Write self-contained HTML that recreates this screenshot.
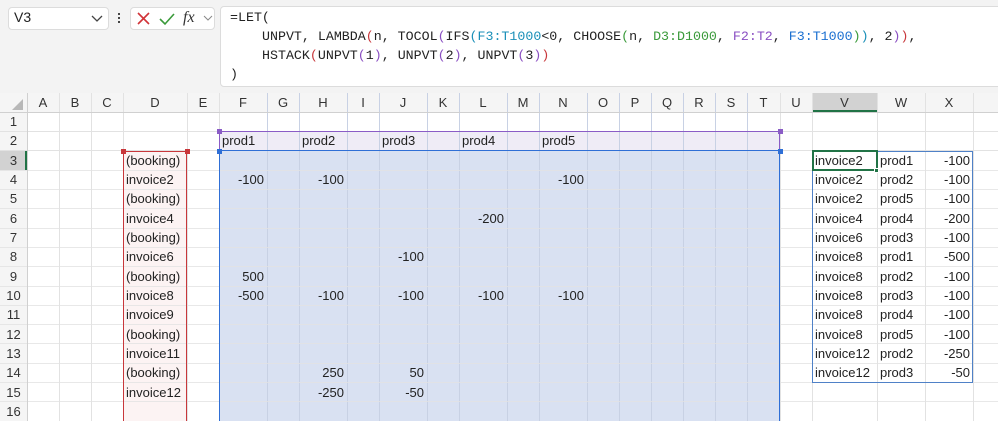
<!DOCTYPE html>
<html><head><meta charset="utf-8"><style>
*{margin:0;padding:0;box-sizing:border-box}
body{width:998px;height:421px;overflow:hidden;background:#fff;font-family:"Liberation Sans",Arial,sans-serif;position:relative;color:#222}
.a{position:absolute}
.t{position:absolute;height:19px;line-height:19px;font-size:13px;white-space:nowrap}
.h{position:absolute;height:19px;line-height:19px;font-size:13px;text-align:center;color:#333}
.vl{position:absolute;top:93px;width:1px;height:328px;background:#e2e2e2}
.hl{position:absolute;left:0;height:1px;width:998px;background:#e2e2e2}
.f{font-family:"Liberation Mono",monospace;font-size:13.3px;position:absolute;white-space:pre;color:#222}
.r{text-align:right}
</style></head><body>
<div class="a" style="left:0;top:0;width:998px;height:93px;background:#f3f3f3"></div>
<div class="a" style="left:8px;top:7px;width:101px;height:23px;background:#fff;border:1px solid #dcdcdc;border-radius:4px"></div>
<div class="t" style="left:14px;top:8px;font-size:14px">V3</div>
<svg class="a" style="left:91px;top:15px" width="12" height="8"><path d="M1 1 L6 6 L11 1" stroke="#444" fill="none" stroke-width="1.3"/></svg>
<div class="a" style="left:118px;top:13px;width:2px;height:2px;background:#444;box-shadow:0 4px #444,0 8px #444"></div>
<div class="a" style="left:130px;top:7px;width:85px;height:23px;background:#fff;border:1px solid #dcdcdc;border-radius:4px"></div>
<svg class="a" style="left:136px;top:11px" width="16" height="16"><path d="M2 2 L13 13 M13 2 L2 13" stroke="#d13438" stroke-width="1.6"/></svg>
<svg class="a" style="left:158px;top:11px" width="18" height="16"><path d="M2 8 L7 13 L16 3" stroke="#3a9a3a" fill="none" stroke-width="1.6"/></svg>
<div class="t" style="left:183px;top:8px;font-family:'Liberation Serif',serif;font-style:italic;font-size:16px;color:#333">fx</div>
<svg class="a" style="left:203px;top:15px" width="10" height="7"><path d="M1 1 L5 5 L9 1" stroke="#888" fill="none" stroke-width="1"/></svg>
<div class="a" style="left:220px;top:6px;width:790px;height:81px;background:#fff;border:1px solid #dcdcdc;border-radius:4px"></div>
<div class="f" style="left:230px;top:10px">=LET(</div>
<div class="f" style="left:262px;top:29px">UNPVT, LAMBDA<span style="color:#c8373b">(</span>n, TOCOL<span style="color:#8a4fc2">(</span>IFS<span style="color:#1a8fb8">(</span><span style="color:#1a8fb8">F3:T1000</span>&lt;0, CHOOSE<span style="color:#3a9a3a">(</span>n, <span style="color:#3a9a3a">D3:D1000</span>, <span style="color:#8a4fc2">F2:T2</span>, <span style="color:#1a6fd0">F3:T1000</span><span style="color:#3a9a3a">)</span><span style="color:#1a8fb8">)</span>, 2<span style="color:#8a4fc2">)</span><span style="color:#c8373b">)</span>,</div>
<div class="f" style="left:262px;top:48px">HSTACK<span style="color:#c8373b">(</span>UNPVT<span style="color:#8a4fc2">(</span>1<span style="color:#8a4fc2">)</span>, UNPVT<span style="color:#8a4fc2">(</span>2<span style="color:#8a4fc2">)</span>, UNPVT<span style="color:#8a4fc2">(</span>3<span style="color:#8a4fc2">)</span><span style="color:#c8373b">)</span></div>
<div class="f" style="left:230px;top:67px">)</div>

<div class="a" style="left:0;top:93px;width:998px;height:19px;background:#f5f5f5"></div>
<div class="a" style="left:0;top:93px;width:27px;height:328px;background:#f5f5f5"></div>
<div class="a" style="left:812px;top:93px;width:65px;height:19px;background:#d2d2d2;border-bottom:2px solid #217346"></div>
<div class="a" style="left:0;top:151px;width:27px;height:19px;background:#d2d2d2;border-right:2px solid #217346"></div>
<svg class="a" style="left:12px;top:99px" width="12" height="12"><path d="M11 0 L11 11 L0 11 Z" fill="#b8b8b8"/></svg>

<div class="a" style="left:219px;top:131px;width:561px;height:20px;background:#efecf6"></div>
<div class="a" style="left:219px;top:151px;width:561px;height:270px;background:#d9e1f2"></div>
<div class="a" style="left:123px;top:151px;width:64px;height:270px;background:#fcf3f3"></div>

<div class="vl" style="left:27px"></div><div class="vl" style="left:59px"></div><div class="vl" style="left:91px"></div><div class="vl" style="left:123px"></div><div class="vl" style="left:187px"></div><div class="vl" style="left:219px"></div><div class="vl" style="left:267px;background:#c8d1e4"></div><div class="vl" style="left:299px;background:#c8d1e4"></div><div class="vl" style="left:347px;background:#c8d1e4"></div><div class="vl" style="left:379px;background:#c8d1e4"></div><div class="vl" style="left:427px;background:#c8d1e4"></div><div class="vl" style="left:459px;background:#c8d1e4"></div><div class="vl" style="left:507px;background:#c8d1e4"></div><div class="vl" style="left:539px;background:#c8d1e4"></div><div class="vl" style="left:587px;background:#c8d1e4"></div><div class="vl" style="left:619px;background:#c8d1e4"></div><div class="vl" style="left:651px;background:#c8d1e4"></div><div class="vl" style="left:683px;background:#c8d1e4"></div><div class="vl" style="left:715px;background:#c8d1e4"></div><div class="vl" style="left:747px;background:#c8d1e4"></div><div class="vl" style="left:780px"></div><div class="vl" style="left:812px"></div><div class="vl" style="left:877px"></div><div class="vl" style="left:925px"></div><div class="vl" style="left:973px"></div>
<div class="hl" style="top:112px;background:#d0d0d0"></div><div class="hl" style="top:131px"></div><div class="hl" style="top:150px"></div><div class="hl" style="top:170px;opacity:.8"></div><div class="hl" style="top:189px;opacity:.8"></div><div class="hl" style="top:208px;opacity:.8"></div><div class="hl" style="top:228px;opacity:.8"></div><div class="hl" style="top:247px;opacity:.8"></div><div class="hl" style="top:266px;opacity:.8"></div><div class="hl" style="top:286px;opacity:.8"></div><div class="hl" style="top:305px;opacity:.8"></div><div class="hl" style="top:324px;opacity:.8"></div><div class="hl" style="top:343px;opacity:.8"></div><div class="hl" style="top:363px;opacity:.8"></div><div class="hl" style="top:382px;opacity:.8"></div><div class="hl" style="top:401px;opacity:.8"></div>
<div class="a" style="left:27px;top:93px;width:1px;height:328px;background:#d0d0d0"></div>

<div class="a" style="left:219px;top:131px;width:561px;height:20px;border:1.5px solid #8a5cc6;border-bottom:none"></div>
<div class="a" style="left:219px;top:150px;width:561px;height:271px;border:1.5px solid #2f6fd6;border-bottom:none"></div>
<div class="a" style="left:123px;top:151px;width:64px;height:270px;border:1.5px solid #c8373b;border-bottom:none"></div>
<div class="a" style="left:217px;top:129px;width:5px;height:5px;background:#8a5cc6"></div><div class="a" style="left:778px;top:129px;width:5px;height:5px;background:#8a5cc6"></div>
<div class="a" style="left:217px;top:149px;width:5px;height:5px;background:#2f6fd6"></div><div class="a" style="left:778px;top:149px;width:5px;height:5px;background:#2f6fd6"></div>
<div class="a" style="left:121px;top:149px;width:5px;height:5px;background:#c8373b"></div><div class="a" style="left:185px;top:149px;width:5px;height:5px;background:#c8373b"></div>
<div class="a" style="left:812px;top:151px;width:161px;height:232px;border:1px solid #4f81c7"></div>
<div class="a" style="left:812px;top:150px;width:66px;height:21px;border:2px solid #217346"></div>
<div class="a" style="left:874px;top:168px;width:5px;height:5px;background:#217346;border:1px solid #fff"></div>

<div class="h" style="left:27px;top:93px;width:32px">A</div><div class="h" style="left:59px;top:93px;width:32px">B</div><div class="h" style="left:91px;top:93px;width:32px">C</div><div class="h" style="left:123px;top:93px;width:64px">D</div><div class="h" style="left:187px;top:93px;width:32px">E</div><div class="h" style="left:219px;top:93px;width:48px">F</div><div class="h" style="left:267px;top:93px;width:32px">G</div><div class="h" style="left:299px;top:93px;width:48px">H</div><div class="h" style="left:347px;top:93px;width:32px">I</div><div class="h" style="left:379px;top:93px;width:48px">J</div><div class="h" style="left:427px;top:93px;width:32px">K</div><div class="h" style="left:459px;top:93px;width:48px">L</div><div class="h" style="left:507px;top:93px;width:32px">M</div><div class="h" style="left:539px;top:93px;width:48px">N</div><div class="h" style="left:587px;top:93px;width:32px">O</div><div class="h" style="left:619px;top:93px;width:32px">P</div><div class="h" style="left:651px;top:93px;width:32px">Q</div><div class="h" style="left:683px;top:93px;width:32px">R</div><div class="h" style="left:715px;top:93px;width:32px">S</div><div class="h" style="left:747px;top:93px;width:33px">T</div><div class="h" style="left:780px;top:93px;width:32px">U</div><div class="h" style="left:812px;top:93px;width:65px">V</div><div class="h" style="left:877px;top:93px;width:48px">W</div><div class="h" style="left:925px;top:93px;width:48px">X</div>
<div class="h" style="left:0;top:112px;width:27px">1</div><div class="h" style="left:0;top:131px;width:27px">2</div><div class="h" style="left:0;top:151px;width:27px">3</div><div class="h" style="left:0;top:170px;width:27px">4</div><div class="h" style="left:0;top:189px;width:27px">5</div><div class="h" style="left:0;top:209px;width:27px">6</div><div class="h" style="left:0;top:228px;width:27px">7</div><div class="h" style="left:0;top:247px;width:27px">8</div><div class="h" style="left:0;top:267px;width:27px">9</div><div class="h" style="left:0;top:286px;width:27px">10</div><div class="h" style="left:0;top:305px;width:27px">11</div><div class="h" style="left:0;top:325px;width:27px">12</div><div class="h" style="left:0;top:344px;width:27px">13</div><div class="h" style="left:0;top:363px;width:27px">14</div><div class="h" style="left:0;top:383px;width:27px">15</div><div class="h" style="left:0;top:402px;width:27px">16</div>

<div class="t" style="left:222px;top:131px">prod1</div><div class="t" style="left:302px;top:131px">prod2</div><div class="t" style="left:382px;top:131px">prod3</div><div class="t" style="left:462px;top:131px">prod4</div><div class="t" style="left:542px;top:131px">prod5</div>
<div class="t" style="left:126px;top:151px">(booking)</div><div class="t" style="left:126px;top:170px">invoice2</div><div class="t" style="left:126px;top:189px">(booking)</div><div class="t" style="left:126px;top:209px">invoice4</div><div class="t" style="left:126px;top:228px">(booking)</div><div class="t" style="left:126px;top:247px">invoice6</div><div class="t" style="left:126px;top:267px">(booking)</div><div class="t" style="left:126px;top:286px">invoice8</div><div class="t" style="left:126px;top:305px">invoice9</div><div class="t" style="left:126px;top:325px">(booking)</div><div class="t" style="left:126px;top:344px">invoice11</div><div class="t" style="left:126px;top:363px">(booking)</div><div class="t" style="left:126px;top:383px">invoice12</div>
<div class="t r" style="left:219px;top:170px;width:45px">-100</div><div class="t r" style="left:299px;top:170px;width:45px">-100</div><div class="t r" style="left:539px;top:170px;width:45px">-100</div>
<div class="t r" style="left:459px;top:209px;width:45px">-200</div>
<div class="t r" style="left:379px;top:247px;width:45px">-100</div>
<div class="t r" style="left:219px;top:267px;width:45px">500</div>
<div class="t r" style="left:219px;top:286px;width:45px">-500</div><div class="t r" style="left:299px;top:286px;width:45px">-100</div><div class="t r" style="left:379px;top:286px;width:45px">-100</div><div class="t r" style="left:459px;top:286px;width:45px">-100</div><div class="t r" style="left:539px;top:286px;width:45px">-100</div>
<div class="t r" style="left:299px;top:363px;width:45px">250</div><div class="t r" style="left:379px;top:363px;width:45px">50</div>
<div class="t r" style="left:299px;top:383px;width:45px">-250</div><div class="t r" style="left:379px;top:383px;width:45px">-50</div>
<div class="t" style="left:815px;top:151px">invoice2</div><div class="t" style="left:880px;top:151px">prod1</div><div class="t r" style="left:925px;top:151px;width:45px">-100</div>
<div class="t" style="left:815px;top:170px">invoice2</div><div class="t" style="left:880px;top:170px">prod2</div><div class="t r" style="left:925px;top:170px;width:45px">-100</div>
<div class="t" style="left:815px;top:189px">invoice2</div><div class="t" style="left:880px;top:189px">prod5</div><div class="t r" style="left:925px;top:189px;width:45px">-100</div>
<div class="t" style="left:815px;top:209px">invoice4</div><div class="t" style="left:880px;top:209px">prod4</div><div class="t r" style="left:925px;top:209px;width:45px">-200</div>
<div class="t" style="left:815px;top:228px">invoice6</div><div class="t" style="left:880px;top:228px">prod3</div><div class="t r" style="left:925px;top:228px;width:45px">-100</div>
<div class="t" style="left:815px;top:247px">invoice8</div><div class="t" style="left:880px;top:247px">prod1</div><div class="t r" style="left:925px;top:247px;width:45px">-500</div>
<div class="t" style="left:815px;top:267px">invoice8</div><div class="t" style="left:880px;top:267px">prod2</div><div class="t r" style="left:925px;top:267px;width:45px">-100</div>
<div class="t" style="left:815px;top:286px">invoice8</div><div class="t" style="left:880px;top:286px">prod3</div><div class="t r" style="left:925px;top:286px;width:45px">-100</div>
<div class="t" style="left:815px;top:305px">invoice8</div><div class="t" style="left:880px;top:305px">prod4</div><div class="t r" style="left:925px;top:305px;width:45px">-100</div>
<div class="t" style="left:815px;top:325px">invoice8</div><div class="t" style="left:880px;top:325px">prod5</div><div class="t r" style="left:925px;top:325px;width:45px">-100</div>
<div class="t" style="left:815px;top:344px">invoice12</div><div class="t" style="left:880px;top:344px">prod2</div><div class="t r" style="left:925px;top:344px;width:45px">-250</div>
<div class="t" style="left:815px;top:363px">invoice12</div><div class="t" style="left:880px;top:363px">prod3</div><div class="t r" style="left:925px;top:363px;width:45px">-50</div>
</body></html>
